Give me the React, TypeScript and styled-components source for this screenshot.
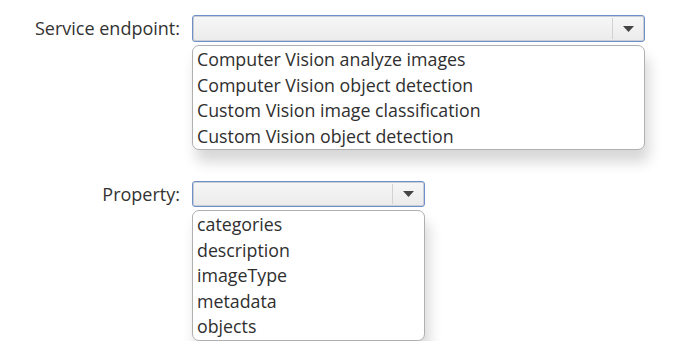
import React from "react";
import { styled, createGlobalStyle } from "styled-components";

const GlobalStyle = createGlobalStyle`
  body {
    margin: 0;
    background: #ffffff;
    font-family: "Open Sans", "Noto Sans", sans-serif;
    color: #333333;
  }
`;

const Page = styled.div`
  display: flex;
  flex-direction: column;
  gap: 31px;
  padding-top: 15px;
`;

const FieldRow = styled.div`
  display: grid;
  grid-template-columns: 180px auto;
  column-gap: 12px;
  align-items: start;
`;

const Label = styled.div<{ $h: number }>`
  text-align: right;
  font-size: 18px;
  height: ${({ $h }) => $h}px;
  line-height: ${({ $h }) => $h}px;
  color: #333333;
  white-space: nowrap;
`;

const Combo = styled.div<{ $w: number }>`
  width: ${({ $w }) => $w}px;
  display: flex;
  flex-direction: column;
  gap: 3px;
`;

const SelectBox = styled.div<{ $h: number }>`
  box-sizing: border-box;
  height: ${({ $h }) => $h}px;
  display: flex;
  border: 1px solid #6f8fc8;
  border-radius: 3px;
  box-shadow: inset 0 0 0 1px #c9cdd4;
  background: linear-gradient(#f7f7f7, #ebebeb);
`;

const SelectValue = styled.div`
  flex: 1;
`;

const ArrowButton = styled.div`
  width: 31px;
  display: flex;
  align-items: center;
  justify-content: center;
  border-left: 1px solid #d2d2d2;
  margin: 2px 0;
`;

const ListBox = styled.ul`
  box-sizing: border-box;
  margin: 0;
  padding: 1px 4px 0;
  list-style: none;
  background: #ffffff;
  border: 1px solid #b0b0b0;
  border-radius: 7px;
  box-shadow: 4px 12px 14px rgba(0, 0, 0, 0.16);
`;

const Option = styled.li`
  font-size: 17.8px;
  line-height: 25.5px;
  color: #2f2f2f;
  white-space: nowrap;
`;

const Arrow = () => (
  <svg width="11" height="6" viewBox="0 0 11 6">
    <path d="M0 0 L11 0 L5.5 6 Z" fill="#454545" />
  </svg>
);

interface DropProps {
  label: string;
  width: number;
  height: number;
  options: string[];
}

const DropField: React.FC<DropProps> = ({ label, width, height, options }) => (
  <FieldRow>
    <Label $h={height}>{label}</Label>
    <Combo $w={width}>
      <SelectBox $h={height}>
        <SelectValue />
        <ArrowButton>
          <Arrow />
        </ArrowButton>
      </SelectBox>
      <ListBox>
        {options.map((o) => (
          <Option key={o}>{o}</Option>
        ))}
      </ListBox>
    </Combo>
  </FieldRow>
);

export default function App() {
  return (
    <>
      <GlobalStyle />
      <Page>
        <DropField
          label="Service endpoint:"
          width={453}
          height={27}
          options={[
            "Computer Vision analyze images",
            "Computer Vision object detection",
            "Custom Vision image classification",
            "Custom Vision object detection",
          ]}
        />
        <DropField
          label="Property:"
          width={233}
          height={26}
          options={["categories", "description", "imageType", "metadata", "objects"]}
        />
      </Page>
    </>
  );
}
